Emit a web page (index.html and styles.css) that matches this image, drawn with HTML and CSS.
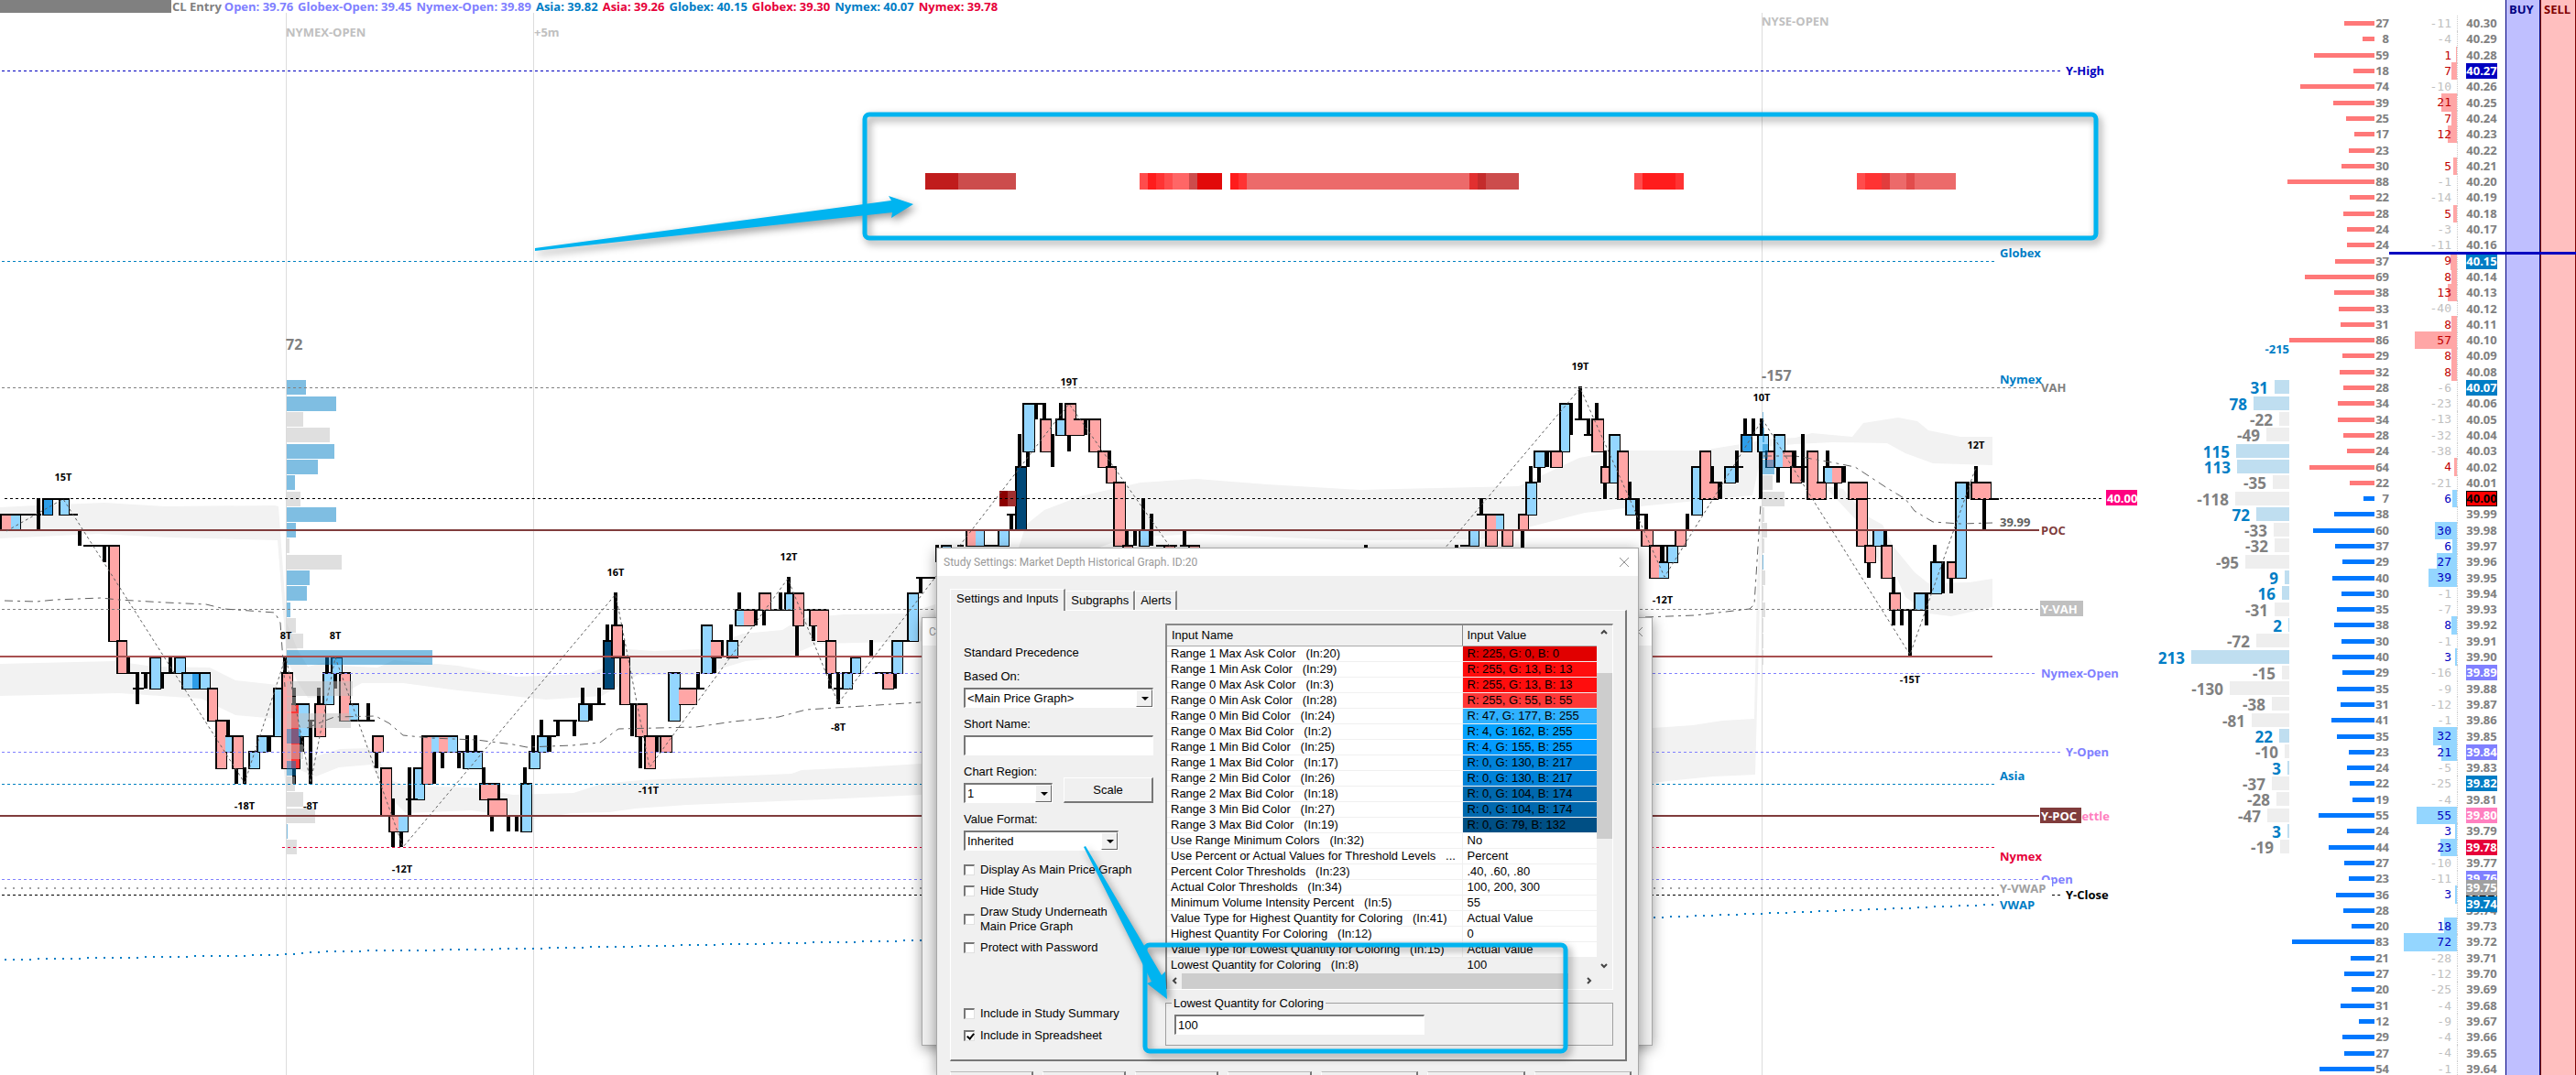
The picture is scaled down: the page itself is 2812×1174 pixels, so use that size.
FILE: index.html
```html
<!DOCTYPE html>
<html lang="en">
<head>
<meta charset="utf-8">
<title>CL Entry</title>
<link rel="stylesheet" href="styles.css">
</head>
<body>
<main class="workspace">
  <section class="chart">
    <svg class="plot" id="plot"></svg>
    <header class="studies">
      <span class="mask"></span>
      <span class="grey">CL Entry</span>
      <span class="violet">Open: 39.76</span>
      <span class="violet">Globex-Open: 39.45</span>
      <span class="violet">Nymex-Open: 39.89</span>
      <span class="azure">Asia: 39.82</span>
      <span class="crimson">Asia: 39.26</span>
      <span class="azure">Globex: 40.15</span>
      <span class="crimson">Globex: 39.30</span>
      <span class="azure">Nymex: 40.07</span>
      <span class="crimson">Nymex: 39.78</span>
    </header>

    <div class="window window-back">
      <div class="titlebar"><span>C</span><svg class="close" viewBox="0 0 12 12"><path d="M1 1L11 11M11 1L1 11"/></svg></div>
    </div>

    <form class="window window-front">
      <div class="titlebar">
        <span>Study Settings: Market Depth Historical Graph. ID:20</span>
        <svg class="close" viewBox="0 0 12 12"><path d="M1 1L11 11M11 1L1 11"/></svg>
      </div>
      <nav class="tabs">
        <button type="button" class="tab active">Settings and Inputs</button>
        <button type="button" class="tab">Subgraphs</button>
        <button type="button" class="tab">Alerts</button>
      </nav>
      <div class="panel">
        <div class="options">
          <p class="heading">Standard Precedence</p>
          <div class="field">
            <label for="based">Based On:</label>
            <span class="combo"><select id="based"><option>&lt;Main Price Graph&gt;</option></select></span>
          </div>
          <div class="field">
            <label for="short">Short Name:</label>
            <input class="text" id="short" type="text">
          </div>
          <div class="field-row">
            <div class="field">
              <label for="region">Chart Region:</label>
              <span class="combo"><select id="region"><option>1</option></select></span>
            </div>
            <button type="button" class="scale">Scale</button>
          </div>
          <div class="field format">
            <label for="format">Value Format:</label>
            <span class="combo"><select id="format"><option>Inherited</option></select></span>
          </div>
          <div class="checks">
            <label><input type="checkbox">Display As Main Price Graph</label>
            <label><input type="checkbox">Hide Study</label>
            <label><input type="checkbox"><span>Draw Study Underneath<br>Main Price Graph</span></label>
            <label><input type="checkbox">Protect with Password</label>
          </div>
          <div class="checks include">
            <label><input type="checkbox">Include in Study Summary</label>
            <label><input type="checkbox" checked>Include in Spreadsheet</label>
          </div>
        </div>
        <div class="inputs">
          <div class="list">
            <table class="values">
              <thead><tr><th>Input Name</th><th>Input Value</th></tr></thead>
              <tbody id="values"></tbody>
            </table>
            <div class="vscroll">
              <svg viewBox="0 0 16 16"><path d="M5 9L8 6L11 9"/></svg>
              <div class="track"><i></i></div>
              <svg viewBox="0 0 16 16"><path d="M5 6L8 9L11 6"/></svg>
            </div>
            <div class="hscroll">
              <svg viewBox="0 0 16 16"><path d="M10 5L7 8L10 11"/></svg>
              <div class="track"><i></i></div>
              <svg viewBox="0 0 16 16"><path d="M6 5L9 8L6 11"/></svg>
            </div>
          </div>
          <fieldset class="group">
            <legend><label for="lowest">Lowest Quantity for Coloring</label></legend>
            <input class="text" id="lowest" type="text" value="100">
          </fieldset>
        </div>
      </div>
      <div class="actions"><i></i><i></i><i></i><i></i><i class="wide"></i><i class="wide"></i><i class="wide"></i></div>
    </form>

    <svg class="notes">
      <rect x="944" y="125" width="1344" height="135" rx="5"/>
      <path d="M584 274L974 232L973 238L997 223L970 214L973 219L584 271Z"/>
      <rect x="1250" y="1032" width="459" height="116" rx="5"/>
      <path d="M1183 925L1185 924L1268 1065L1272 1061L1274 1091L1252 1074L1257 1072Z"/>
    </svg>
  </section>

  <aside class="dom">
    <table class="ladder"><tbody id="ladder"></tbody></table>
    <div class="side buy">BUY</div>
    <div class="side sell">SELL</div>
    <div class="high-line"></div>
    <span class="tag mean">39.75</span>
    <span class="tag vwap">39.74</span>
  </aside>
</main>
<script src="chart.js"></script>
</body>
</html>
```
FILE: styles.css
```css
* { box-sizing: border-box; }

body {
  margin: 0;
  overflow: hidden;
  background: #fff;
  font-family: "Open Sans", "Noto Sans", sans-serif;
}

.workspace {
  display: flex;
  height: 100vh;
  overflow: hidden;
}

/* chart */
.chart {
  position: relative;
  flex: 1;
  min-width: 0;
  display: grid;
}

.chart > .plot,
.chart > .studies,
.chart > .notes { grid-area: 1 / 1; }

.plot, .notes {
  width: 100%;
  height: 100%;
  overflow: visible;
}

.plot text { font-weight: 700; font-size: 13px; }
.plot .big { font-size: 16px; }
.plot .vol { font-size: 17px; text-anchor: end; }
.plot .swing { font-size: 11px; text-anchor: middle; }
.plot .end { text-anchor: end; }

.studies {
  position: relative;
  align-self: start;
  display: flex;
  gap: 5px;
  font-size: 13px;
  line-height: 14px;
  font-weight: 700;
  white-space: nowrap;
}
.studies .mask { width: 187px; height: 14px; background: #808080; margin-right: -4px; }
.studies .grey { color: #808080; margin-right: -2px; }
.violet { color: #8080ff; }
.azure { color: #007dc5; }
.crimson { color: #e60039; }

.notes {
  position: relative;
  z-index: 5;
  pointer-events: none;
  filter: drop-shadow(3px 4px 4px rgba(0, 0, 0, .4));
}
.notes rect { fill: none; stroke: #00b4f0; stroke-width: 5; }
.notes path { fill: #00b4f0; }

/* windows */
.window {
  position: absolute;
  background: #f0f0f0;
  border: 1px solid #a8a8a8;
  box-shadow: 0 3px 14px rgba(0, 0, 0, .4);
  font-family: "Liberation Sans", Arial, sans-serif;
  font-size: 13px;
  line-height: 16px;
  color: #000;
}
.window-back { left: 1006px; top: 674px; width: 798px; height: 468px; }
.window-front {
  left: 1022px;
  top: 598px;
  bottom: 0;
  width: 767px;
  border-bottom: 0;
  overflow: hidden;
}

.titlebar {
  display: flex;
  align-items: center;
  justify-content: space-between;
  height: 30px;
  padding: 0 9px 0 7px;
  background: #fff;
  color: #999;
  font-family: Roboto, "Open Sans", sans-serif;
  font-size: 12px;
}
.close { width: 12px; height: 12px; fill: none; stroke: #909090; }

.tabs { display: flex; align-items: flex-end; height: 37px; margin: 0 0 0 14px; }
.tab {
  height: 21px;
  padding: 0 5px;
  border: 0;
  border-top: 1px solid #fff;
  border-left: 1px solid #fff;
  border-right: 2px solid #888;
  background: none;
  font: inherit;
}
.tab.active { height: 24px; padding: 0 6px 4px; background: #f0f0f0; margin-bottom: -1px; }

.panel {
  display: grid;
  grid-template-columns: 207px 1fr;
  gap: 13px;
  margin: 0 12px 0 14px;
  padding: 14px 13px 15px 14px;
  height: 493px;
  border: 1px solid #fff;
  border-right: 2px solid #777;
  border-bottom: 2px solid #777;
}

.heading { margin: 0; padding: 24px 0 0; }
.field { display: flex; flex-direction: column; gap: 4px; margin-top: 10px; }
.field-row { display: flex; justify-content: space-between; align-items: flex-end; }
.field-row .field { width: 97px; }
.format { width: 169px; }

.text, .combo {
  height: 22px;
  border: 1px solid #fff;
  border-top: 2px solid #777;
  border-left: 2px solid #777;
  background: #fff;
  font: inherit;
}
.text { padding: 0 2px; width: 100%; }
.combo { position: relative; display: flex; }
.combo select {
  appearance: none;
  flex: 1;
  border: 0;
  padding: 0 2px;
  background: none;
  font: inherit;
  color: #000;
}
.combo::before {
  content: "";
  position: absolute;
  right: 0; top: 0; bottom: 0;
  width: 16px;
  background: #f0f0f0;
  border: 1px solid #fff;
  border-right-color: #666;
  border-bottom-color: #666;
  pointer-events: none;
}
.combo::after {
  content: "";
  position: absolute;
  right: 4px; top: 8px;
  border: 4px solid transparent;
  border-top-color: #000;
  border-bottom: 0;
  pointer-events: none;
}
.scale {
  width: 98px;
  height: 28px;
  border: 1px solid #fff;
  border-right: 2px solid #777;
  border-bottom: 2px solid #777;
  background: #f0f0f0;
  font: inherit;
}

.checks { display: flex; flex-direction: column; gap: 7px; margin-top: 13px; }
.checks.include { margin-top: 56px; gap: 8px; }
.checks label { display: flex; align-items: center; gap: 6px; }
.checks input {
  appearance: none;
  width: 12px;
  height: 12px;
  margin: 0;
  background: #fff;
  border: 1px solid #e0e0e0;
  border-top: 2px solid #777;
  border-left: 2px solid #777;
}
.checks input:checked::after {
  content: "";
  display: block;
  width: 3px;
  height: 6px;
  margin: 0 0 0 3px;
  border: solid #000;
  border-width: 0 2px 2px 0;
  transform: rotate(40deg);
}

.list {
  display: grid;
  grid-template-columns: 1fr 17px;
  border: 1px solid #fff;
  border-top: 2px solid #888;
  border-left: 2px solid #888;
  background: #fff;
}
.values { border-collapse: collapse; table-layout: fixed; width: 100%; }
.values th {
  height: 22px;
  padding: 0 5px;
  text-align: left;
  font-weight: 400;
  background: #f0f0f0;
  border-bottom: 1px solid #aaa;
}
.values th:first-child { width: 322px; border-right: 1px solid #888; }
.values td {
  height: 17px;
  padding: 0 5px;
  line-height: 16px;
  border-bottom: 1px solid #f0f0f0;
  white-space: pre;
}
.values td:first-child { padding: 0 0 0 4px; border-right: 1px solid #f0f0f0; }
.values tr.selected td { background: #f0f0f0; }
.vscroll, .hscroll { display: flex; background: #f0f0f0; }
.vscroll { flex-direction: column; }
.vscroll svg, .hscroll svg { width: 16px; height: 16px; flex: none; fill: none; stroke: #444; stroke-width: 2; }
.track { flex: 1; }
.track i { display: block; background: #cdcdcd; }
.vscroll .track { padding-top: 36px; }
.vscroll .track i { height: 181px; }
.hscroll { grid-column: 1 / -1; height: 17px; padding-right: 17px; }
.hscroll .track { display: flex; }
.hscroll .track i { width: 422px; }

.group {
  margin: 7px 0 0;
  padding: 4px 9px 10px;
  height: 54px;
  border: 1px solid #a0a0a0;
  min-width: 0;
}
.group legend { padding: 0 2px; margin-left: -3px; }
.group .text { width: 273px; display: block; }
.actions { display: flex; gap: 10px; margin: 11px 7px 0 14px; }
.actions i {
  flex: 92 1 0;
  height: 28px;
  border: 1px solid #fff;
  border-top-color: #bbb;
  border-right: 2px solid #777;
}
.actions .wide { flex-grow: 108; }

/* price ladder */
.dom {
  position: relative;
  flex: none;
  width: 312px;
  display: flex;
}
.ladder {
  display: block;
  flex: 1;
  margin: 17px 0 -2px;
  font-size: 13px;
  line-height: 17px;
  font-weight: 700;
  color: #808080;
}
.ladder tbody { display: grid; height: 100%; grid-auto-rows: 1fr; }
.ladder tr {
  display: grid;
  grid-template-columns: 92px 16px 75px 52px;
  align-items: center;
  min-height: 0;
}
.ladder td { position: relative; padding: 0; height: 17px; }
.ladder .depth i {
  position: absolute;
  right: 0;
  top: 6px;
  height: 5px;
}
.ladder .ask .depth i { background: #ff7878; }
.ladder .bid .depth i { background: #0078ff; }
.ladder .size { text-align: right; }
.ladder .delta {
  height: 100%;
  padding-right: 6px;
  border-right: 1px dotted #ccc;
  text-align: right;
  font-family: "DejaVu Sans Mono", monospace;
  font-weight: 400;
}
.ladder .delta i { position: absolute; right: 0; top: -1px; bottom: -1px; }
.ladder .delta b { position: relative; font-weight: 400; }
.ladder .delta.neg { color: #c0c0c0; }
.ask .delta.pos { color: #c00000; }
.bid .delta.pos { color: #0000c0; }
.ask .delta i { background: #ffa6a6; }
.bid .delta i { background: #94d6ff; }
.ladder .price { padding-left: 9px; }
.ladder .price span { display: block; width: 34px; text-align: center; }

.tag {
  position: absolute;
  left: 192px;
  width: 34px;
  font-size: 13px;
  line-height: 17px;
  font-weight: 700;
  text-align: center;
  color: #fff;
}
.mean { top: 961px; background: #a0a0a0; }
.vwap { top: 979px; background: #007dc5; }
.c-navy { background: #0000c0; color: #fff; }
.c-azure { background: #007dc5; color: #fff; }
.c-violet { background: #8080ff; color: #fff; }
.c-pink { background: #ff80c0; color: #fff; }
.c-crimson { background: #e60039; color: #fff; }
.c-black { background: #000; color: #fff; }
.c-last { background: #f00; color: #000; outline: 1px solid #000; outline-offset: -1px; }

.side {
  padding: 2px 0 0 3px;
  font-size: 13px;
  line-height: 17px;
  font-weight: 700;
}
.buy { width: 38px; background: #bfbfff; color: #000080; border-left: 1px solid #000080; border-right: 1px solid #000080; }
.sell { width: 39px; background: #ffbfbf; color: #800000; border-left: 1px solid #800000; border-right: 1px solid #800000; }
.high-line {
  position: absolute;
  left: 108px;
  right: 0;
  top: 275px;
  height: 3px;
  background: #0000c0;
}
```
FILE: chart.js
```js
var TICK = 17.3;
function Y(n) { return Math.round(544.5 + TICK * n); }
var out = [];
function rect(x, y, w, h, fill) {
  out.push('<rect x="' + x + '" y="' + y + '" width="' + w + '" height="' + h + '" fill="' + fill + '"/>');
}
function poly(pts, attrs) { out.push('<path d="M' + pts + '" ' + attrs + '/>'); }
function text(x, y, s, fill, cls) {
  out.push('<text x="' + x + '" y="' + y + '" fill="' + fill + '" class="' + (cls || '') + '">' + s + '</text>');
}

/* deviation bands */
[
  '0 554 40 552 114 549 180 553 300 552 304 553 313 680 325 710 336 728 360 722 373 727 412 729 430 721 500 727 564 739 640 736 657 730 686 709 714 711 766 709 811 692 854 688 875 675 921 671 989 670 1021 660 1021 700 893 703 857 718 814 722 764 737 696 737 657 760 596 764 500 754 440 746 395 746 370 760 336 762 325 745 313 720 303 590 185 587 107 583 0 588Z',
  '0 725 125 722 168 728 229 729 257 743 303 748 312 840 325 832 371 818 404 817 429 853 443 858 514 860 560 868 626 866 657 856 700 852 864 845 875 841 940 838 1006 834 1006 868 900 873 750 879 693 883 665 887 625 888 582 894 514 885 443 888 425 870 405 835 370 838 345 848 325 840 312 860 303 785 257 781 220 763 130 757 0 760Z',
  '1078 600 1112 598 1120 573 1140 557 1179 542 1245 527 1306 523 1383 529 1485 535 1658 531 1724 500 1767 492 1857 492 1913 483 1925 480 1960 478 1978 473 2022 477 2034 462 2072 456 2093 460 2105 470 2140 477 2175 477 2175 508 2110 506 2080 495 2060 484 2000 483 1960 485 1925 488 1913 541 1800 552 1730 560 1617 589 1474 590 1306 583 1230 587 1194 600Z',
  '1990 530 2012 534 2037 563 2055 573 2067 597 2090 625 2105 637 2150 636 2175 632 2175 663 2130 673 2105 670 2080 652 2070 630 2050 612 2030 572 2000 540Z',
  '1804 795 1848 792 1880 787 1915 785 1918 640 1922 560 1923 560 1920 700 1916 846 1870 848 1830 852 1804 855Z'
].forEach(function (d) { poly(d, 'fill="#f2f2f2"'); });

[[312, 14], [582, 14], [1923, 14]].forEach(function (v) { rect(v[0], v[1], 1, 1160, '#dcdcdc'); });

/* candles: bodies [x0 x1 top bottom colour], upper-case colour joins the bar on its left */
var COL = { r: '#ffa6a6', b: '#94d6ff', d: '#2d9de8', n: '#004878', x: '#ff3737' };
var bodies = '0 12 1 2 r,12 22 1 2 B,46 57 0 1 d,64 75 0 1 b,118 130 3 9 r,127 138 9 11 r,163 175 10 12 b,190 202 10 11 b,' +
'198 211 11 12 b,210 217 11 12 D,217 229 11 12 b,226 237 12 14 r,235 247 14 17 r,246 254 15 16 B,253 265 15 17 r,271 283 16 17 b,' +
'280 291 15 16 b,298 309 12 15 b,307 319 11 17 r,318 327 13 17 X,326 337 13 15 B,343 355 13 15 r,352 364 11 13 b,361 373 10 11 b,' +
'370 382 11 14 r,381 391 13 14 B,406 418 15 16 r,415 427 17 20 r,424 436 20 21 r,435 445 20 21 B,451 463 17 19 b,460 472 15 18 r,' +
'471 480 15 16 B,479 490 15 16 R,489 499 15 16 B,505 526 16 17 b,523 543 18 19 r,532 553 19 20 r,568 580 18 21 b,577 589 16 17 b,' +
'586 597 15 16 b,631 642 13 14 b,658 670 9 12 n,667 679 8 10 r,676 687 10 13 r,693 706 13 15 r,703 715 15 17 r,720 733 15 16 r,' +
'729 742 11 14 b,741 760 12 13 R,765 777 8 11 b,776 787 9 10 R,793 805 9 10 b,802 813 7 8 b,812 823 7 8 R,828 841 6 7 r,' +
'856 867 6 7 b,865 877 6 8 r,883 894 7 8 r,892 904 7 9 R,901 912 9 11 r,919 930 11 12 b,928 939 10 11 b,963 975 11 12 r,' +
'973 985 9 11 b,990 1002 6 9 b,1027 1038 3 4 b,1054 1065 2 3 r,1065 1074 2 3 B,1089 1101 2 3 b,1108 1120 -2 2 n,1116 1129 -6 -3 b,' +
'1135 1147 -5 -3 r,1152 1163 -5 -4 b,1162 1174 -6 -4 r,1172 1183 -5 -4 R,1188 1201 -5 -3 r,1198 1209 -3 -2 r,1207 1218 -2 -1 r,' +
'1215 1228 -1 3 r,1225 1236 3 4 r,1243 1254 2 3 b,1270 1282 3 4 r,1297 1309 3 4 r,1603 1614 2 3 b,1621 1634 1 3 r,1633 1641 1 2 B,' +
'1639 1651 2 3 r,1657 1668 1 2 r,1665 1677 -1 1 b,1674 1686 -3 -2 b,1692 1705 -3 -2 r,1702 1713 -6 -3 b,1737 1750 -5 -3 r,' +
'1747 1758 -2 -1 r,1756 1768 -4 -1 b,1765 1777 -3 0 r,1774 1785 0 1 b,1791 1804 2 3 r,1800 1812 3 5 r,1811 1821 4 5 B,1819 1831 3 4 b,' +
'1828 1840 2 3 r,1846 1858 -2 1 b,1855 1867 -3 0 r,1866 1875 -1 0 R,1882 1894 -2 -1 b,1900 1912 -4 -3 d,1918 1930 -4 -3 b,' +
'1927 1938 -3 -2 r,1936 1948 -4 -2 b,1946 1956 -3 -2 R,1954 1966 -2 -1 r,1972 1984 -3 0 r,1983 1993 -1 0 R,1990 2001 -2 -1 b,' +
'2000 2010 -2 -1 R,2017 2038 -1 0 r,2026 2038 0 3 r,2035 2047 3 4 r,2044 2056 2 3 b,2053 2065 3 5 r,2062 2074 6 7 r,2089 2101 6 7 b,' +
'2107 2119 4 6 b,2125 2136 4 5 r,2134 2146 -1 5 b,2151 2173 -1 0 r';
/* wicks [x top bottom] and flat closes [level x0 x1] */
var wicks = '42 0 2,87 2 3,114 3 4,140 10 11,150 11 13,159 11 12,177 11 12,186 10 11,249 14 15,258 17 18,267 17 18,294 15 16,' +
'311 10 11,321 12 13,321 17 18,330 15 16,339 14 18,348 12 13,357 10 11,366 11 12,402 13 14,411 16 17,429 19 20,429 21 22,438 21 22,' +
'447 17 20,474 16 18,483 16 17,501 16 17,510 15 16,519 15 16,528 17 18,544 18 19,537 20 21,555 20 21,564 20 21,573 17 18,582 15 16,' +
'591 14 15,600 15 16,609 14 15,627 14 15,636 12 13,645 13 14,654 12 13,663 8 9,672 6 8,680 9 10,690 13 15,699 15 17,717 15 16,' +
'762 11 12,780 10 11,788 9 10,798 8 9,825 7 8,807 6 7,834 7 8,852 6 7,861 5 6,870 8 10,888 8 9,906 11 12,915 11 13,951 9 10,' +
'977 11 12,1005 5 6,1023 3 4,1104 1 2,1113 -4 -2,1131 -6 -5,1122 -3 -2,1140 -6 -5,1149 -4 -2,1158 -6 -5,1185 -5 -4,1167 -4 -3,' +
'1211 -3 -2,1230 2 3,1239 2 3,1248 0 2,1257 1 3,1293 2 3,1491 3 4,1590 3 4,1617 0 1,1662 2 4,1671 -2 -1,1680 -2 -1,1689 -3 -2,' +
'1715 -6 -4,1725 -7 -5,1734 -5 -4,1743 -6 -5,1752 -3 -2,1752 -1 0,1779 -1 0,1788 0 2,1797 1 2,1815 3 4,1842 1 2,1869 -2 -1,' +
'1878 -1 0,1896 -3 -1,1905 -5 -4,1914 -5 -4,1923 -5 -4,1922 -3 0,1941 -2 -1,1959 -3 -2,1968 -4 -1,1995 -3 -2,2004 -1 0,2013 -2 -1,' +
'2040 4 5,2058 2 3,2067 5 6,2067 7 8,2076 7 8,2085 7 10,2103 6 8,2112 3 4,2121 4 6,2130 5 6,2148 -1 0,2157 -2 -1,2166 0 2';
var flats = '1 0 45,0 46 75,1 75 85,3 91 118,11 138 148,12 145 157,11 154 163,11 177 190,14 237 250,15 289 298,14 336 345,14 382 409,' +
'19 443 456,15 460 499,16 499 506,18 523 546,15 596 607,14 604 630,13 642 661,13 688 706,15 715 733,12 741 769,7 802 829,7 841 856,6 856 877,' +
'7 877 904,12 910 920,11 955 965,9 985 993,5 1000 1021,3 1045 1052,3 1074 1090,1 1099 1108,-6 1117 1138,-5 1172 1188,3 1262 1285,' +
'3 1288 1309,3 1594 1604,1 1612 1641,-3 1674 1705,-5 1719 1732,-4 1729 1738,1 1785 1797,3 1812 1822,-1 1866 1880,-2 1894 1903,-4 1912 1920,' +
'-3 1946 1960,-2 1960 1972,-1 1984 1993,-2 1990 2014,7 2071 2090,6 2101 2108,0 2173 2182';
wicks.split(',').forEach(function (s) {
  var a = s.split(' ').map(Number);
  rect(a[0] - 2, Y(a[1]) - 1, 4, Y(a[2]) - Y(a[1]) + 1, '#000');
});
bodies.split(',').forEach(function (s) {
  var a = s.split(' '), c = a[4].toLowerCase(), left = a[4] === c ? 2 : 0;
  var x = +a[0], w = a[1] - a[0] + 1, t = Y(+a[2]) - 1, h = Y(+a[3]) - t + 1;
  rect(x, t, w, h, '#000');
  rect(x + left, t + 2, w - left - 1, h - 3, COL[c]);
});
flats.split(',').forEach(function (s) {
  var a = s.split(' ').map(Number);
  rect(a[1], Y(a[0]) - 1, a[2] - a[1], 2, '#000');
});

/* market depth history */
[[1010, 1046, '#c01c1c'], [1046, 1109, '#cc4c4c'], [1244, 1253, '#ff4c4c'], [1253, 1262, '#ff1c1c'], [1262, 1271, '#ff3333'],
 [1271, 1280, '#ff4c4c'], [1280, 1298, '#ff6666'], [1298, 1307, '#cc4c4c'], [1307, 1334, '#e20a0a'], [1343, 1352, '#ff1c1c'],
 [1352, 1361, '#ff3333'], [1361, 1604, '#ec6a6a'], [1604, 1613, '#e23030'], [1613, 1622, '#c42c2c'], [1622, 1658, '#cc4c4c'],
 [1784, 1793, '#ff4c4c'], [1793, 1829, '#ff1c1c'], [1829, 1838, '#ff3333'], [2027, 2036, '#ff4c4c'], [2036, 2054, '#ff3333'],
 [2054, 2063, '#e23c3c'], [2063, 2081, '#ec6a6a'], [2081, 2090, '#e24c4c'], [2090, 2135, '#ec6a6a']
].forEach(function (b) { rect(b[0], 189, b[1] - b[0], 18, b[2]); });
rect(1091, 536, 9, 17, '#8b0000');
rect(1100, 536, 9, 17, '#a03030');

/* volume profiles at the session opens */
function profile(x, first, list) {
  list.forEach(function (v, i) {
    if (v) rect(x, Y(first + i) - 8, Math.abs(v), 16, v > 0 ? 'rgba(0,125,197,.5)' : 'rgba(192,192,192,.5)');
  });
}
profile(313, -7, [21, 54, -18, -47, 52, 34, 9, -15, 54, 10, -3, -60, 25, 22, 4, -10, -18, 159, 0, -72, -10, -70, 15, -18, 10, -9, -18, -31, 1, -11]);
profile(1924, -5, [1, 2, 6, 13, -11, -24, -2, -5, -2, 1, -3, -1, -3, -1, -1, -1]);

/* price levels [y, x0, x1, colour] */
[[77, 2, 2250, '#0000c0'], [285, 2, 2178, '#0080c0'], [423, 2, 2226, '#808080'], [544, 5, 2294, '#000'], [665, 2, 2226, '#808080'],
 [735, 352, 2222, '#8080ff'], [821, 2, 2250, '#8080ff'], [856, 2, 2178, '#0080c0'], [925, 308, 2178, '#e60039'],
 [960, 2, 2226, '#8080ff'], [977, 2, 2250, '#000']].forEach(function (l) {
  poly(l[1] + ' ' + (l[0] + .5) + 'H' + l[2], 'stroke="' + l[3] + '" stroke-dasharray="3 3"');
});
[[77, 2, 2250, '#0000c0'], [285, 2, 2178, '#0080c0'], [423, 2, 2226, '#808080'], [544, 5, 2294, '#000'], [665, 2, 2226, '#808080'],
 [735, 352, 2222, '#8080ff'], [821, 2, 2250, '#8080ff'], [856, 2, 2178, '#0080c0'], [925, 308, 2178, '#e60039'],
 [960, 2, 2226, '#8080ff'], [977, 2, 2250, '#000']].forEach(function (l) {
  poly(l[1] + ' ' + (l[0] + .5), 'fill="none"');
  out.pop();
  out.push('<line x1="' + l[1] + '" x2="' + l[2] + '" y1="' + (l[0] + .5) + '" y2="' + (l[0] + .5) + '" stroke="' + l[3] + '" stroke-dasharray="3 3"/>');
});
rect(0, 578, 2226, 2, '#803c3c');
rect(0, 716, 2175, 2, '#a85050');
rect(0, 890, 2226, 2, '#803c3c');
for (var x = 5; x < 2178; x += 9) {
  rect(x, 969, 2, 2, '#a0a0a0');
  var k = [[5, 1047], [300, 1042], [360, 1038], [520, 1036], [1005, 1026], [1805, 1001], [2177, 987]];
  for (var i = 1; i < k.length - 1 && x > k[i][0]; i++);
  var p = k[i - 1], q = k[i];
  rect(x, Math.round(p[1] + (q[1] - p[1]) * (x - p[0]) / (q[0] - p[0])), 2, 2, '#007dc5');
}

/* averages and swings */
[
  '5 656 40 657 60 655 110 653 130 655 180 658 225 660 245 665 300 669 306 680 311 750',
  '335 795 365 783 410 782 425 790 440 803 470 806 520 808 560 813 575 816 625 814 655 811 675 796 760 794 800 788 850 783 880 775 1005 767',
  '1796 674 1850 672 1910 665 1915 660 1922 550',
  '1925 498 1960 498 2000 505 2025 510 2060 533 2080 545 2090 558 2110 570 2140 572 2175 571'
].forEach(function (d) { poly(d, 'fill="none" stroke="#606060" stroke-dasharray="9 5 3 5"'); });
poly('7 580 69 545 267 855 312 717 339 855 366 718 440 925 672 649 709 838 860 632 915 768 1167 441 1350 700 1500 690 1725 424 1817 630 1924 458 2085 715 2157 510',
  'fill="none" stroke="#606060" stroke-dasharray="3 3"');

[[69, 525, '15T'], [312, 698, '8T'], [366, 698, '8T'], [267, 884, '-18T'], [339, 884, '-8T'], [439, 953, '-12T'], [672, 629, '16T'],
 [708, 867, '-11T'], [861, 612, '12T'], [915, 798, '-8T'], [1167, 421, '19T'], [1725, 404, '19T'], [1923, 438, '10T'],
 [1815, 659, '-12T'], [2157, 490, '12T'], [2085, 746, '-15T']].forEach(function (t) { text(t[0], t[1], t[2], '#000', 'swing'); });

text(312, 40, 'NYMEX-OPEN', '#c0c0c0');
text(583, 40, '+5m', '#c0c0c0');
text(1923, 28, 'NYSE-OPEN', '#c0c0c0');
text(312, 382, '72', '#808080', 'big');
text(1923, 416, '-157', '#808080', 'big');
text(2255, 82, 'Y-High', '#0000c0');
text(2183, 281, 'Globex', '#007dc5');
text(2183, 419, 'Nymex', '#007dc5');
text(2228, 428, 'VAH', '#808080');
text(2183, 575, '39.99', '#606060');
text(2228, 584, 'POC', '#803c3c');
rect(2227, 656, 47, 17, '#c0c0c0');
text(2228, 670, 'Y-VAH', '#fff');
text(2228, 740, 'Nymex-Open', '#8080ff');
text(2255, 826, 'Y-Open', '#8080ff');
text(2183, 852, 'Asia', '#007dc5');
text(2303, 896, 'Settle', '#ff80c0', 'end');
rect(2227, 882, 45, 17, '#803c3c');
text(2228, 896, 'Y-POC', '#fff');
text(2183, 940, 'Nymex', '#e60039');
text(2228, 965, 'Open', '#8080ff');
rect(2182, 961, 58, 17, '#fff');
text(2183, 975, 'Y-VWAP', '#a0a0a0');
text(2183, 993, 'VWAP', '#007dc5');
text(2255, 982, 'Y-Close', '#000');
rect(2299, 535, 34, 17, '#ff0080');
text(2300, 549, '40.00', '#fff');

/* session delta profile */
[31, 78, -22, -49, 115, 113, -35, -118, 72, -33, -32, -95, 9, 16, -31, 2, -72, 213, -15, -130, -38, -81, 22, -10, 3, -37, -28, -47, 3, -19]
.forEach(function (v, i) {
  var w = Math.max(1, Math.round(Math.abs(v) / 2));
  rect(2499 - w, Y(i - 7) - 8, w, 15, v > 0 ? '#bfdef0' : '#eeeeee');
  text(2492 - w, Y(i - 7) + 7, v, v > 0 ? '#007dc5' : '#808080', 'vol');
});
text(2499, 386, '-215', '#007dc5', 'end');
document.getElementById('plot').innerHTML = out.join('');

/* ladder rows */
var sizes = [27,8,59,18,74,39,25,17,23,30,88,22,28,24,24,37,69,38,33,31,86,29,32,28,34,34,28,24,64,22,7,38,60,37,29,40,30,35,38,30,40,29,35,31,41,35,23,24,22,19,55,24,44,27,23,36,28,20,83,21,27,20,31,12,29,27,54];
var deltas = [-11,-4,1,7,-10,21,7,12,0,5,-1,-14,5,-3,-11,9,8,13,-40,8,57,8,8,-6,-23,-13,-32,-38,4,-21,6,0,30,6,27,39,-1,-7,8,-1,3,-16,-9,-12,-1,32,21,-5,-25,-4,55,3,23,-10,-11,3,0,18,72,-28,-12,-25,-4,-9,-4,-4,-1];
var marks = { '40.27': 'navy', '40.15': 'azure', '40.07': 'azure', '40.00': 'last', '39.89': 'violet', '39.84': 'violet', '39.82': 'azure', '39.80': 'pink', '39.78': 'crimson', '39.76': 'violet', '39.75': 'black' };
document.getElementById('ladder').innerHTML = sizes.map(function (s, i) {
  var price = ((4030 - i) / 100).toFixed(2), d = deltas[i];
  var bar = d > 0 ? '<i style="width:' + Math.round(d * .8) + 'px"></i>' : '';
  return '<tr class="' + (i < 30 ? 'ask' : 'bid') + '"><td class="depth"><i style="width:' + Math.round(4.8 + s * 1.03) + 'px"></i></td>' +
    '<td class="size">' + s + '</td><td class="delta ' + (d > 0 ? 'pos' : 'neg') + '">' + bar + '<b>' + (d || '') + '</b></td>' +
    '<td class="price"><span class="' + (marks[price] ? 'c-' + marks[price] : '') + '">' + price + '</span></td></tr>';
}).join('');

/* study inputs [name, value] */
document.getElementById('values').innerHTML = [
  ['Range 1 Max Ask Color   (In:20)', 'R: 225, G: 0, B: 0'],
  ['Range 1 Min Ask Color   (In:29)', 'R: 255, G: 13, B: 13'],
  ['Range 0 Max Ask Color   (In:3)', 'R: 255, G: 13, B: 13'],
  ['Range 0 Min Ask Color   (In:28)', 'R: 255, G: 55, B: 55'],
  ['Range 0 Min Bid Color   (In:24)', 'R: 47, G: 177, B: 255'],
  ['Range 0 Max Bid Color   (In:2)', 'R: 4, G: 162, B: 255'],
  ['Range 1 Min Bid Color   (In:25)', 'R: 4, G: 155, B: 255'],
  ['Range 1 Max Bid Color   (In:17)', 'R: 0, G: 130, B: 217'],
  ['Range 2 Min Bid Color   (In:26)', 'R: 0, G: 130, B: 217'],
  ['Range 2 Max Bid Color   (In:18)', 'R: 0, G: 104, B: 174'],
  ['Range 3 Min Bid Color   (In:27)', 'R: 0, G: 104, B: 174'],
  ['Range 3 Max Bid Color   (In:19)', 'R: 0, G: 79, B: 132'],
  ['Use Range Minimum Colors   (In:32)', 'No'],
  ['Use Percent or Actual Values for Threshold Levels   ...', 'Percent'],
  ['Percent Color Thresholds   (In:23)', '.40, .60, .80'],
  ['Actual Color Thresholds   (In:34)', '100, 200, 300'],
  ['Minimum Volume Intensity Percent   (In:5)', '55'],
  ['Value Type for Highest Quantity for Coloring   (In:41)', 'Actual Value'],
  ['Highest Quantity For Coloring   (In:12)', '0'],
  ['Value Type for Lowest Quantity for Coloring   (In:15)', 'Actual Value'],
  ['Lowest Quantity for Coloring   (In:8)', '100']
].map(function (r, i) {
  var c = r[1].match(/R: (\d+), G: (\d+), B: (\d+)/);
  return '<tr' + (i === 20 ? ' class="selected"' : '') + '><td>' + r[0] + '</td><td' +
    (c ? ' style="background:rgb(' + c.slice(1).join() + ')"' : '') + '>' + r[1] + '</td></tr>';
}).join('');
```
